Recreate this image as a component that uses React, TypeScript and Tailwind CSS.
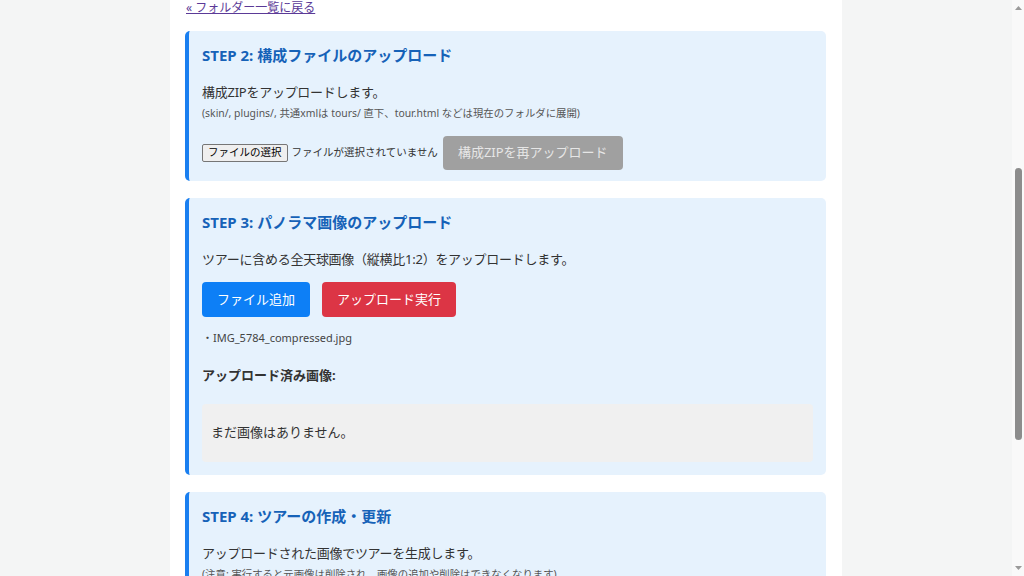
import type { ReactNode } from "react";

function Card({ title, children, className = "" }: { title: string; children: ReactNode; className?: string }) {
  return (
    <section
      className={`rounded-[5px] border-l-4 border-[#1a7ff0] bg-[#e6f2fd] px-[13px] pt-[13px] ${className}`}
    >
      <h3 className="text-[15px] font-bold leading-[22px] text-[#1662b8]">{title}</h3>
      {children}
    </section>
  );
}

function Scrollbar() {
  return (
    <div className="flex h-full w-[12px] shrink-0 flex-col items-center bg-[#f9f9f9]">
      <div className="flex h-[16px] items-center justify-center">
        <svg width="7" height="4" viewBox="0 0 7 4">
          <polygon points="3.5,0 7,4 0,4" fill="#9a9a9a" />
        </svg>
      </div>
      <div className="flex-1">
        <div className="mt-[152px] h-[272px] w-[7px] rounded-full bg-[#8c8c8c]" />
      </div>
      <div className="flex h-[16px] items-center justify-center">
        <svg width="7" height="4" viewBox="0 0 7 4">
          <polygon points="0,0 7,0 3.5,4" fill="#9a9a9a" />
        </svg>
      </div>
    </div>
  );
}

export default function App() {
  return (
    <div className="flex h-screen w-full overflow-hidden bg-[#f4f5f5] font-['Noto_Sans','Noto_Sans_CJK_JP',sans-serif] text-[#333]">
      <main className="flex-1 overflow-hidden">
        <div className="mx-auto min-h-full w-[672px] bg-white pl-[15px] pr-[16px]">
          <a href="#" className="block pl-px text-[12px] leading-[16px] text-[#5b3a97] underline">
            « フォルダー一覧に戻る
          </a>

          <Card title="STEP 2: 構成ファイルのアップロード" className="mt-[15px] pb-[11px]">
            <p className="mt-[16px] text-[13px] leading-[20px] tracking-[-0.02em]">構成ZIPをアップロードします。</p>
            <p className="mt-[3px] text-[10.4px] leading-[16px] text-[#555]">
              (skin/, plugins/, 共通xmlは tours/ 直下、tour.html などは現在のフォルダに展開)
            </p>
            <div className="mt-[15px] flex items-center">
              <span className="flex h-[18px] items-center rounded-[2px] border border-[#767676] bg-[#efefef] px-[5px] text-[10.5px] text-black">
                ファイルの選択
              </span>
              <span className="ml-[4px] text-[10.5px] text-[#333]">ファイルが選択されていません</span>
              <button className="ml-[5px] h-[34px] rounded-[4px] bg-[#a0a0a0] px-[15px] text-[13px] text-[#e6e6e6]">
                構成ZIPを再アップロード
              </button>
            </div>
          </Card>

          <Card title="STEP 3: パノラマ画像のアップロード" className="mt-[17px] pb-[13px]">
            <p className="mt-[16px] text-[13px] leading-[20px] tracking-[-0.02em]">
              ツアーに含める全天球画像（縦横比1:2）をアップロードします。
            </p>
            <div className="mt-[13px] flex gap-[12px]">
              <button className="h-[35px] rounded-[4px] bg-[#0d7ff6] px-[15px] text-[13px] text-white">
                ファイル追加
              </button>
              <button className="h-[35px] rounded-[4px] bg-[#dc3545] px-[15px] text-[13px] text-white">
                アップロード実行
              </button>
            </div>
            <p className="mt-[13px] text-[11px] leading-[16px] text-[#444]">・IMG_5784_compressed.jpg</p>
            <p className="mt-[19px] text-[13px] font-bold leading-[20px]">アップロード済み画像:</p>
            <div className="mt-[19px] flex h-[58px] items-center rounded-[4px] bg-[#f0f0f0] px-[9px] text-[13px]">
              まだ画像はありません。
            </div>
          </Card>

          <Card title="STEP 4: ツアーの作成・更新" className="mt-[17px] pb-[13px]">
            <p className="mt-[16px] text-[13px] leading-[20px] tracking-[-0.02em]">
              アップロードされた画像でツアーを生成します。
            </p>
            <p className="mt-[3px] text-[10.4px] leading-[16px] text-[#555]">
              (注意: 実行すると元画像は削除され、画像の追加や削除はできなくなります)
            </p>
            <button className="mt-[13px] h-[35px] rounded-[4px] bg-[#28a745] px-[15px] text-[13px] text-white">
              ツアーを作成・更新
            </button>
          </Card>
        </div>
      </main>
      <Scrollbar />
    </div>
  );
}
